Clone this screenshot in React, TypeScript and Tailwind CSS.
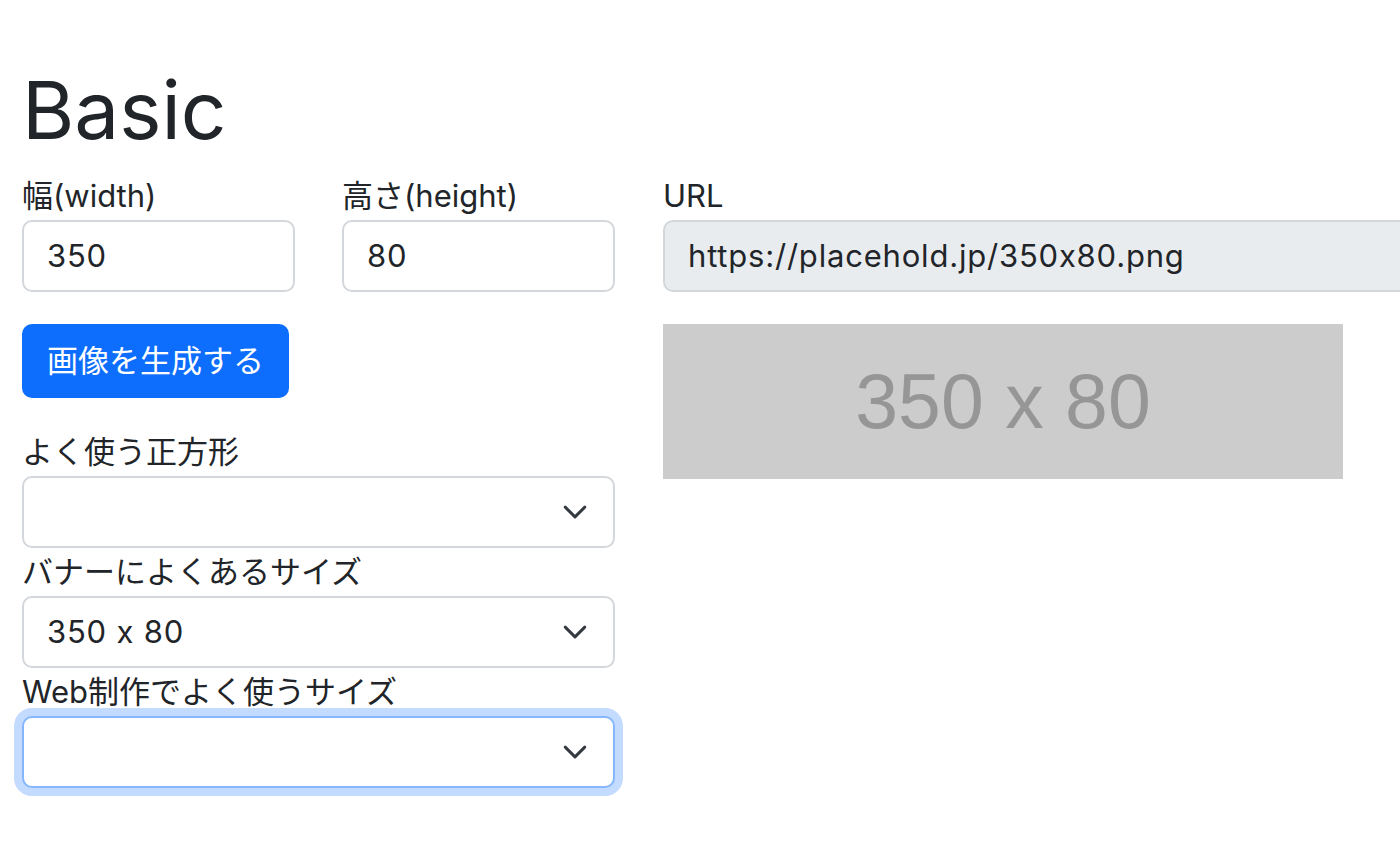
import React from "react";

function Chevron() {
  return (
    <svg width="26" height="26" viewBox="0 0 16 16" className="absolute right-[25px] top-1/2 -translate-y-1/2" fill="none">
      <path d="m2 5 6 6 6-6" stroke="#343a40" strokeWidth="1.8" strokeLinecap="round" strokeLinejoin="round" />
    </svg>
  );
}

function Label({ children }: { children: React.ReactNode }) {
  return <div className="h-[48px] leading-[48px] text-[31px] whitespace-nowrap">{children}</div>;
}

function Select({ value, focused }: { value?: string; focused?: boolean }) {
  return (
    <div
      className={
        focused
          ? "relative h-[72px] w-full rounded-[10px] border-2 border-[#86b7fe] bg-white shadow-[0_0_0_8px_rgba(13,110,253,0.25)] flex items-center pl-[23px] text-[31px]"
          : "relative h-[72px] w-full rounded-[10px] border-2 border-[#d3d7dc] bg-white flex items-center pl-[23px] text-[31px]"
      }
    >
      <span className="tracking-[0.8px] whitespace-pre">{value}</span>
      <Chevron />
    </div>
  );
}

export default function App() {
  return (
    <div className="w-[1400px] h-[843px] overflow-hidden bg-white text-[#212529] pl-[22px] font-['Inter','Noto_Sans_CJK_JP',sans-serif] [font-feature-settings:'calt'_0]">
      <h1 className="mt-[69px] h-[82px] text-[80px] leading-[82px] font-normal">Basic</h1>
      <div className="mt-[21px] flex gap-x-[48px]">
        <div className="w-[593px] shrink-0 flex flex-col">
          <div className="grid grid-cols-2 gap-x-[47px]">
            <div>
              <Label>幅(width)</Label>
              <div className="h-[72px] rounded-[10px] border-2 border-[#d3d7dc] bg-white flex items-center pl-[23px] text-[31px] tracking-[0.8px]">350</div>
            </div>
            <div>
              <Label>高さ(height)</Label>
              <div className="h-[72px] rounded-[10px] border-2 border-[#d3d7dc] bg-white flex items-center pl-[23px] text-[31px] tracking-[0.8px]">80</div>
            </div>
          </div>
          <button className="mt-[32px] w-[267px] h-[74px] rounded-[10px] bg-[#0d6efd] text-white text-[31px] flex items-center justify-center whitespace-nowrap">
            画像を生成する
          </button>
          <div className="mt-[30px]">
            <Label>よく使う正方形</Label>
            <Select />
            <Label>バナーによくあるサイズ</Label>
            <Select value="350 x 80" />
            <Label>Web制作でよく使うサイズ</Label>
            <Select focused />
          </div>
        </div>
        <div className="w-[760px] shrink-0">
          <Label>URL</Label>
          <div className="h-[72px] rounded-[10px] border-2 border-[#d3d7dc] bg-[#e9ecef] flex items-center pl-[23px] text-[31px] tracking-[0.8px] whitespace-nowrap">
            https://placehold.jp/350x80.png
          </div>
          <div className="mt-[32px] w-[680px] h-[155px] bg-[#cccccc] flex items-center justify-center">
            <span className="text-[77px] text-[#969696] font-['Liberation_Sans',Arial,sans-serif] leading-none whitespace-pre">350 x 80</span>
          </div>
        </div>
      </div>
    </div>
  );
}
